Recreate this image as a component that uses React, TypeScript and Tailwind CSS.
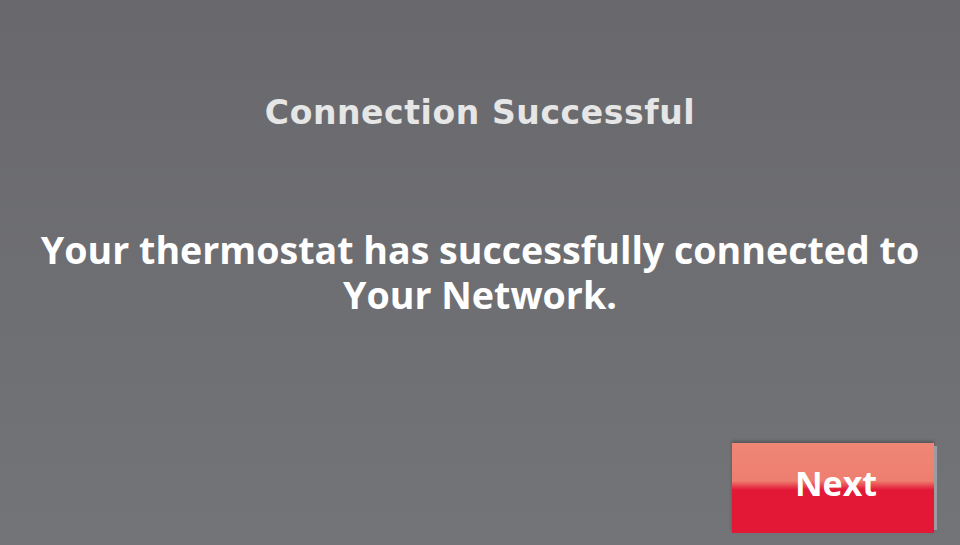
export default function App() {
  return (
    <div className="w-[960px] h-[545px] overflow-hidden bg-gradient-to-b from-[#69696d] to-[#737478] flex flex-col items-center relative">
      <h1
        className="mt-[91px] text-[33px] font-bold text-[#e6e6e6] leading-[44px] tracking-[0.6px]"
        style={{ fontFamily: '"DejaVu Sans", Verdana, sans-serif' }}
      >
        Connection Successful
      </h1>
      <p
        className="mt-[92px] text-[37.6px] font-bold text-white leading-[45px] text-center"
        style={{ fontFamily: '"Open Sans", sans-serif' }}
      >
        Your thermostat has successfully connected to
        <br />
        Your Network.
      </p>
      <div className="flex-1" />
      <div className="self-end mr-[23px] mb-[12px] flex">
        <button
          className="w-[202px] h-[90px] pl-[6px] pb-[10px] bg-[linear-gradient(to_bottom,#ef8676_0%,#ee7f70_42%,#e31837_52%,#e31837_100%)] text-white text-[34px] font-bold shadow-[0_-2px_3px_rgba(0,0,0,0.25)]"
          style={{ fontFamily: '"Open Sans", sans-serif' }}
        >
          Next
        </button>
        <div className="w-[3px] my-[3px] bg-[#9b9ca0]" />
      </div>
    </div>
  );
}
